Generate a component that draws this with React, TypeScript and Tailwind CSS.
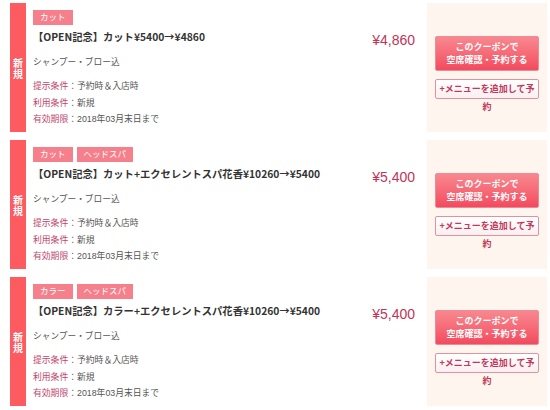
import React from "react";

interface Coupon {
  tags: string[];
  title: string;
  price: string;
}

const COUPONS: Coupon[] = [
  { tags: ["カット"], title: "【OPEN記念】カット¥5400→¥4860", price: "¥4,860" },
  { tags: ["カット", "ヘッドスパ"], title: "【OPEN記念】カット+エクセレントスパ花香¥10260→¥5400", price: "¥5,400" },
  { tags: ["カラー", "ヘッドスパ"], title: "【OPEN記念】カラー+エクセレントスパ花香¥10260→¥5400", price: "¥5,400" },
];

const CONDITIONS = [
  { label: "提示条件", value: "予約時＆入店時" },
  { label: "利用条件", value: "新規" },
  { label: "有効期限", value: "2018年03月末日まで" },
];

function CouponCard({ coupon }: { coupon: Coupon }) {
  return (
    <div className="flex h-[129px]">
      <div className="ml-[10px] flex w-[16px] flex-col items-center justify-center bg-[#fd5b60] pt-[2px] text-[10px] font-bold leading-[11px] text-white">
        <span>新</span>
        <span>規</span>
      </div>

      <div className="flex min-w-0 flex-1">
        <div className="min-w-0 flex-1 pl-[7px] pt-[7px]">
          <div className="flex gap-[4px]">
            {coupon.tags.map((t) => (
              <span
                key={t}
                className="flex h-[15px] items-center bg-[#f5808b] px-[7px] text-[8.5px] text-white"
              >
                {t}
              </span>
            ))}
          </div>
          <p className="mt-[4px] whitespace-nowrap font-['Noto_Sans_CJK_JP',sans-serif] text-[10.3px] font-bold leading-[16px] text-[#333]">
            {coupon.title}
          </p>
          <p className="mt-[9px] text-[8.7px] leading-[16px] text-[#555]">シャンプー・ブロー込</p>
          <div className="mt-[8px] text-[8.8px] leading-[16.5px]">
            {CONDITIONS.map((c) => (
              <p key={c.label} className="text-[#555]">
                <span className="text-[#c0456a]">{c.label}</span>：{c.value}
              </p>
            ))}
          </div>
        </div>
        <div className="pr-[12px] pt-[28px] text-[14px] leading-[18px] text-[#bf3459]">{coupon.price}</div>
      </div>

      <div className="mr-[3px] flex w-[120px] flex-col items-center bg-[#fdf5ee]">
        <button className="mt-[33px] flex h-[35px] w-[104px] flex-col items-center justify-center rounded-[2px] border border-[#ee8a95] bg-gradient-to-b from-[#f8878f] to-[#f2495f] text-[9px] font-bold leading-[13px] text-white">
          <span>このクーポンで</span>
          <span>空席確認・予約する</span>
        </button>
        <button className="mt-[8px] h-[20px] w-[104px] rounded-[2px] border border-[#dc95a0] bg-gradient-to-b from-white to-[#fbeef0] text-center text-[9px] font-bold leading-[18px] text-[#c2385b]">
          <span className="block">+メニューを追加して予</span>
          <span className="block">約</span>
        </button>
      </div>
    </div>
  );
}

export default function App() {
  return (
    <div className="flex h-[410px] w-[550px] flex-col gap-[8px] bg-white pt-[3px] font-['Liberation_Sans','Noto_Sans_CJK_JP',sans-serif]">
      {COUPONS.map((c, i) => (
        <CouponCard key={i} coupon={c} />
      ))}
    </div>
  );
}
